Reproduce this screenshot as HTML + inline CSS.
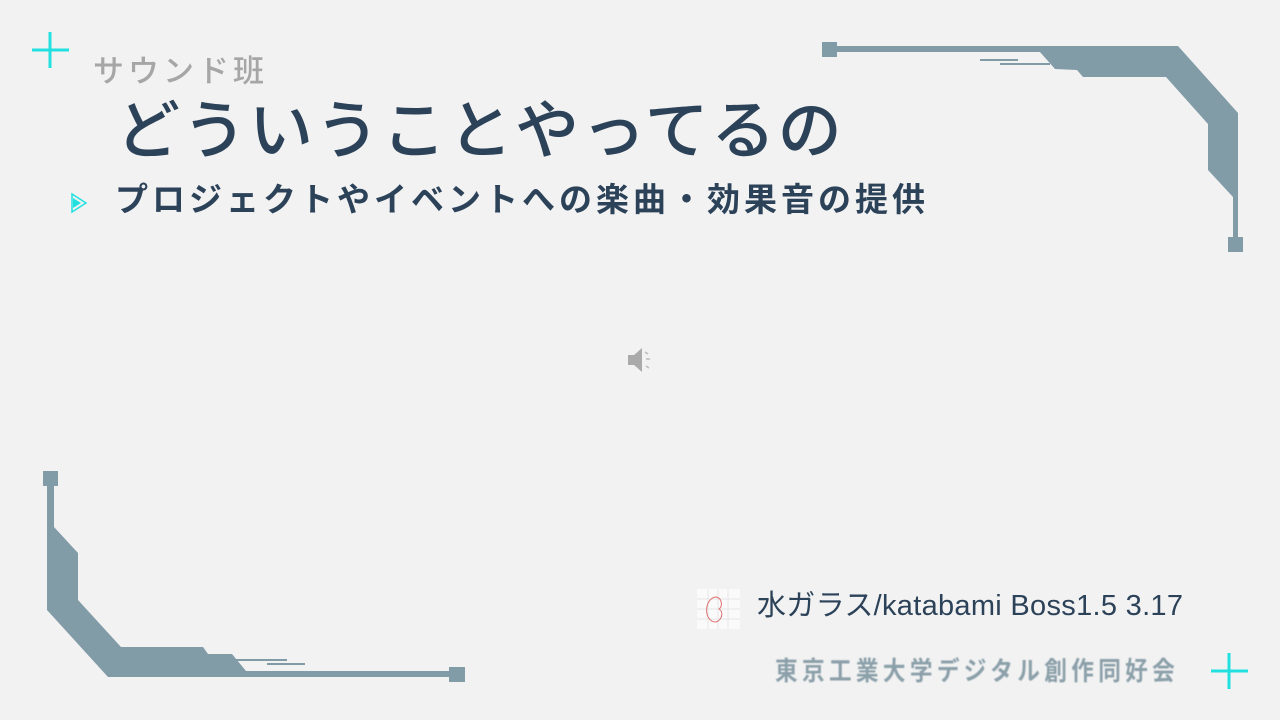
<!DOCTYPE html>
<html><head><meta charset="utf-8"><style>
body{margin:0;width:1280px;height:720px;background:#f2f2f2;overflow:hidden;position:relative;font-family:"Liberation Sans","Noto Sans CJK JP",sans-serif}
.t{position:absolute;white-space:nowrap;line-height:1}
</style></head><body>
<svg width="1280" height="720" style="position:absolute;left:0;top:0">
<g fill="#819ba7">
<rect x="822" y="42" width="15" height="15"/>
<polygon points="837,46 1178,46 1238,113 1238,197 1238,240 1233,240 1233,197 1208,170 1208,124 1166,77 1083,77 1077,70 1055,69 1040,52 837,52"/>
<rect x="1228" y="237" width="15" height="15"/>
<rect x="980" y="59" width="38" height="2"/>
<rect x="1000" y="63" width="50" height="2"/>
<rect x="43" y="471" width="15" height="15"/>
<polygon points="47,486 54,486 54,527 78,553 78,600 121,647 203,647 208,654 232,654 246,671 455,671 455,677 108,677 47,610"/>
<rect x="449" y="667" width="16" height="15"/>
<rect x="233" y="659" width="54" height="2"/>
<rect x="267" y="663" width="38" height="2"/>
</g>
<g stroke="#22e0e0" stroke-width="3">
<line x1="32" y1="50" x2="69" y2="50"/><line x1="50" y1="32" x2="50" y2="68"/>
<line x1="1211" y1="671" x2="1248" y2="671"/><line x1="1229" y1="653" x2="1229" y2="689"/>
</g>
<polygon points="72,194 72,212 86,203" fill="none" stroke="#22e0e0" stroke-width="1.5"/>
<polygon points="73,198 73,208 81,203" fill="#22e0e0"/>
<g fill="#aaa"><rect x="628" y="355" width="6" height="10"/><polygon points="634,355 642,348 642,372 634,365"/></g>
<g stroke="#bbb" stroke-width="1.5" fill="none"><path d="M645,352 L648,354 M646,359 L650,359 M646,366 L649,368"/></g>
<rect x="697" y="589" width="43" height="40" fill="#fafafa"/>
<g stroke="#e6e6e6" stroke-width="1"><path d="M697,609H740M718,589V629M697,599H740M697,619H740M708,589V629M728,589V629"/></g>
<path d="M716,597 C704,598 703,622 716,622 C722,620 724,612 719,609 C723,606 722,598 716,597Z" fill="none" stroke="#e07070" stroke-width="1"/>
</svg>
<div class="t" style="left:93px;top:56px;font-size:31px;letter-spacing:4px;color:#a6a6a6;font-weight:500">サウンド班</div>
<div class="t" style="left:116px;top:99px;font-size:64px;color:#2c4259;letter-spacing:2.5px;font-weight:500">どういうことやってるの</div>
<div class="t" style="left:115px;top:183px;font-size:33px;color:#2c4259;letter-spacing:4px;font-weight:bold">プロジェクトやイベントへの楽曲・効果音の提供</div>
<div class="t" style="left:757px;top:592px;font-size:29px;color:#2c4259;letter-spacing:0.3px">水ガラス/katabami Boss1.5 3.17</div>
<div class="t" style="left:775px;top:658px;font-size:26px;color:#8ca0aa;letter-spacing:5px;font-weight:bold;filter:blur(0.6px);transform:scaleX(0.87);transform-origin:0 0">東京工業大学デジタル創作同好会</div>
</body></html>
